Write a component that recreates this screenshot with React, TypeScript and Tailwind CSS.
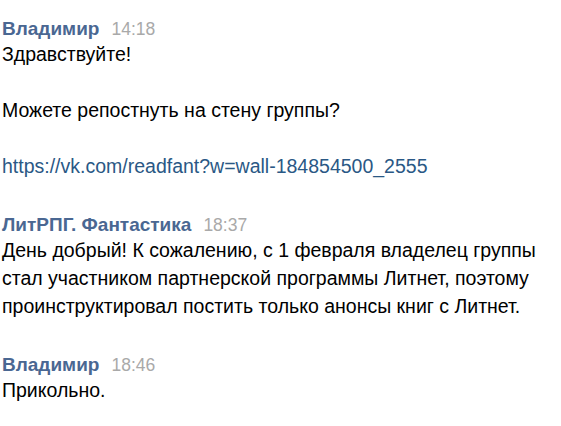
type Msg = {
  author: string;
  time: string;
  paragraphs: { text: string; link?: boolean }[];
};

const messages: Msg[] = [
  {
    author: "Владимир",
    time: "14:18",
    paragraphs: [
      { text: "Здравствуйте!" },
      { text: "Можете репостнуть на стену группы?" },
      { text: "https://vk.com/readfant?w=wall-184854500_2555", link: true },
    ],
  },
  {
    author: "ЛитРПГ. Фантастика",
    time: "18:37",
    paragraphs: [
      {
        text: "День добрый! К сожалению, с 1 февраля владелец группы стал участником партнерской программы Литнет, поэтому проинструктировал постить только анонсы книг с Литнет.",
      },
    ],
  },
  {
    author: "Владимир",
    time: "18:46",
    paragraphs: [{ text: "Прикольно." }],
  },
];

export default function App() {
  return (
    <div className="h-[426px] w-[561px] bg-white pl-[2px] pt-[18px] font-['Liberation_Sans',Arial,sans-serif]">
      <div className="flex flex-col gap-[34px]">
        {messages.map((m, i) => (
          <div key={i} className="flex flex-col">
            <div className="flex items-baseline gap-[12px] leading-[21px]">
              <span className="text-[19px] font-bold text-[#4a6792]">{m.author}</span>
              <span className="text-[17.5px] text-[#a9a9a9]">{m.time}</span>
            </div>
            <div className="flex flex-col gap-[28px] text-[19.5px] leading-[28px] text-black">
              {m.paragraphs.map((p, j) =>
                p.link ? (
                  <a key={j} className="text-[#2a5885]">
                    {p.text}
                  </a>
                ) : (
                  <p key={j}>{p.text}</p>
                )
              )}
            </div>
          </div>
        ))}
      </div>
    </div>
  );
}
